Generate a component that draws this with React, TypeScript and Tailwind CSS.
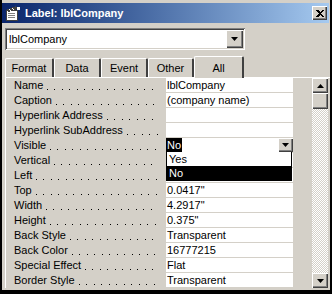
import React from 'react';

const raised = 'shadow-[inset_1px_1px_#ffffff,inset_-1px_-1px_#404040,inset_-2px_-2px_#808080]';
const sunken = 'shadow-[inset_1px_1px_#808080,inset_-1px_-1px_#ffffff,inset_2px_2px_#404040,inset_-2px_-2px_#d4d0c8]';

const props: [string, string][] = [
  ['Name', 'lblCompany'],
  ['Caption', '(company name)'],
  ['Hyperlink Address', ''],
  ['Hyperlink SubAddress', ''],
  ['Visible', 'No'],
  ['Vertical', ''],
  ['Left', ''],
  ['Top', '0.0417"'],
  ['Width', '4.2917"'],
  ['Height', '0.375"'],
  ['Back Style', 'Transparent'],
  ['Back Color', '16777215'],
  ['Special Effect', 'Flat'],
  ['Border Style', 'Transparent'],
];

const tabs = [
  { label: 'Format', w: 'w-[49px]' },
  { label: 'Data', w: 'w-[47px]' },
  { label: 'Event', w: 'w-[47px]' },
  { label: 'Other', w: 'w-[46px]' },
];

function Arrow({ up = false }: { up?: boolean }) {
  return (
    <svg width="7" height="4" viewBox="0 0 7 4" className={up ? 'rotate-180' : ''}>
      <path d="M0 0h7L3.5 4z" fill="#000" />
    </svg>
  );
}

function SheetIcon() {
  return (
    <svg width="16" height="16" viewBox="0 0 16 16" shapeRendering="crispEdges">
      <rect x="1" y="5" width="11" height="10" fill="#fff" stroke="#404040" />
      <path d="M3 8h7M3 10h7M3 12h7" stroke="#808080" />
      <path d="M1 5 L11 1 L13 4 L3 7 Z" fill="#404040" />
      <path d="M4 4.5 L6 5.8 M7 3.4 L9 4.7" stroke="#fff" />
      <path d="M12 2h3v3h-3z" fill="#fff" />
    </svg>
  );
}

export default function App() {
  return (
    <div className="w-[332px] h-[294px] bg-[#d4d0c8] border-l-2 border-r-2 border-b-4 border-black pt-[3px] font-['Liberation_Sans',Arial,sans-serif] text-[11px] text-black overflow-hidden">
      {/* Title bar */}
      <div className="h-[20px] mr-[1px] flex items-center bg-gradient-to-r from-[#0a246a] to-[#a6caf0] pl-[3px] pr-[2px]">
        <SheetIcon />
        <span className="ml-[4px] text-white font-bold text-[11px] leading-none">Label: lblCompany</span>
        <div className={`ml-auto w-[15px] h-[14px] bg-[#d4d0c8] flex items-center justify-center ${raised}`}>
          <svg width="8" height="7" viewBox="0 0 8 7" shapeRendering="crispEdges">
            <path d="M0 0h2l2 2 2-2h2L5 3.5 8 7H6L4 5 2 7H0l3-3.5z" fill="#000" />
          </svg>
        </div>
      </div>

      {/* Object combo */}
      <div className={`mt-[5px] ml-[3px] w-[240px] h-[22px] bg-white flex items-center pl-[4px] pr-[2px] ${sunken}`}>
        <span className="flex-1">lblCompany</span>
        <div className={`w-[17px] h-[18px] bg-[#d4d0c8] flex items-center justify-center ${raised}`}>
          <Arrow />
        </div>
      </div>

      {/* Tabs */}
      <div className="mt-[6px] ml-[3px] h-[21px] flex items-end">
        {tabs.map((t) => (
          <div
            key={t.label}
            className={`${t.w} h-[19px] flex items-center justify-center border-l border-t border-white border-r-2 border-r-[#404040] rounded-t-[2px] pt-[1px]`}
          >
            {t.label}
          </div>
        ))}
        <div className="w-[50px] h-[22px] -mb-[1px] bg-[#d4d0c8] relative z-10 flex items-start justify-center pt-[3px] border-l border-t border-white border-r-2 border-r-[#404040] rounded-t-[2px]">
          All
        </div>
      </div>

      {/* Property page */}
      <div className="ml-[3px] h-[211px] border-l border-t border-white flex relative">
        <div className="w-[287px] relative">
          {props.map(([label, value], i) => (
            <div key={label} className="h-[15px] flex">
              <div className="w-[160px] h-[15px] flex items-start pl-[8px] pr-[8px] whitespace-nowrap">
                <span className="shrink-0 leading-[15px]">{label}</span>
                <div className="mt-[11px] ml-[4px] h-[1px] flex-1 bg-[repeating-linear-gradient(90deg,#000_0px_1px,transparent_1px_7px,#000_7px_8px,transparent_8px_15px)]" />
              </div>
              <div className="flex-1 h-[15px] flex border-b border-[#d4d0c8] bg-white">
                {i === 4 ? (
                  <div className="flex-1 flex items-stretch">
                    <span className="bg-black text-white px-[1px] leading-[14px]">{value}</span>
                    <div className="flex-1" />
                    <div className={`w-[15px] bg-[#d4d0c8] flex items-center justify-center ${raised}`}>
                      <Arrow />
                    </div>
                  </div>
                ) : (
                  <span className="pl-[1px] leading-[14px] whitespace-nowrap">{value}</span>
                )}
              </div>
            </div>
          ))}
          {/* Dropdown list for Visible */}
          <div className="absolute left-[160px] top-[74px] w-[126px] h-[29px] bg-white border border-black border-t-0 flex flex-col">
            <div className="h-[14px] leading-[14px] pl-[2px]">Yes</div>
            <div className="h-[14px] leading-[14px] pl-[2px] bg-black text-white">No</div>
          </div>
        </div>
        <div className="flex-1" />
        {/* Scrollbar */}
        <div className="w-[16px] mr-[2px] flex flex-col">
          <div className={`h-[15px] bg-[#d4d0c8] flex items-center justify-center ${raised}`}>
            <Arrow up />
          </div>
          <div className={`h-[16px] bg-[#d4d0c8] ${raised}`} />
          <div className="flex-1 bg-[repeating-conic-gradient(#ffffff_0%_25%,#d4d0c8_0%_50%)] bg-[length:2px_2px]" />
          <div className={`h-[15px] bg-[#d4d0c8] flex items-center justify-center ${raised}`}>
            <Arrow />
          </div>
        </div>
      </div>
    </div>
  );
}
